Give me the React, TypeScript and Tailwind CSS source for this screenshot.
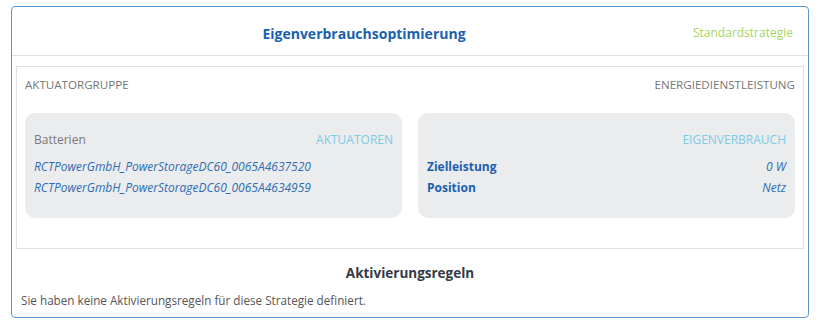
import React from 'react';

const FONT = { fontFamily: '"Open Sans", "Noto Sans", sans-serif' };

const ACTUATORS = [
  'RCTPowerGmbH_PowerStorageDC60_0065A4637520',
  'RCTPowerGmbH_PowerStorageDC60_0065A4634959',
];

const SERVICE_ROWS: [string, string][] = [
  ['Zielleistung', '0 W'],
  ['Position', 'Netz'],
];

function ActuatorCard() {
  return (
    <div className="flex-1 rounded-[10px] bg-[#ebecee] px-[9px] pt-[18px] pb-[20px]">
      <div className="flex items-center justify-between text-[12px] leading-[18px]">
        <span className="text-[#7a7a7a]">Batterien</span>
        <span className="text-[#7ccbe6]">AKTUATOREN</span>
      </div>
      <div className="mt-[7px] flex flex-col">
        {ACTUATORS.map((name) => (
          <a key={name} className="text-[12px] italic leading-[21px] text-[#2d6cb4]">
            {name}
          </a>
        ))}
      </div>
    </div>
  );
}

function ServiceCard() {
  return (
    <div className="flex-1 rounded-[10px] bg-[#ebecee] px-[9px] pt-[18px] pb-[20px]">
      <div className="flex items-center justify-end text-[12px] leading-[18px]">
        <span className="text-[#7ccbe6]">EIGENVERBRAUCH</span>
      </div>
      <div className="mt-[7px] flex flex-col">
        {SERVICE_ROWS.map(([label, value]) => (
          <div key={label} className="flex items-center justify-between text-[12px] leading-[21px]">
            <span className="font-bold text-[#1b5eae]">{label}</span>
            <span className="italic text-[#2d6cb4]">{value}</span>
          </div>
        ))}
      </div>
    </div>
  );
}

export default function App() {
  return (
    <div className="h-[329px] w-[820px] bg-white pl-[11px] pt-[6px]" style={FONT}>
      <div className="w-[798px] rounded-[4px] border border-[#5b96cf] bg-white">
        {/* Header */}
        <div className="relative flex h-[49px] items-center border-b border-[#e3e3e3] pt-[4px]">
          <h2 className="flex-1 pr-[92px] text-center text-[14px] font-bold text-[#1a5fb0]">
            Eigenverbrauchsoptimierung
          </h2>
          <span className="absolute right-[15px] text-[12px] text-[#a9d55b]">Standardstrategie</span>
        </div>

        {/* Actuator group / energy service */}
        <div className="mx-[4px] mt-[10px] h-[183px] border border-[#e1e1e1] px-[8px] pt-[9px]">
          <div className="flex items-center justify-between text-[11.6px] leading-[18px] text-[#767676]">
            <span>AKTUATORGRUPPE</span>
            <span>ENERGIEDIENSTLEISTUNG</span>
          </div>
          <div className="mt-[19px] flex gap-[16px]">
            <ActuatorCard />
            <ServiceCard />
          </div>
        </div>

        {/* Activation rules */}
        <div className="px-[9px] pt-[14px] pb-[8px]">
          <h3 className="text-center text-[13.5px] font-bold leading-[20px] text-[#333a46]">Aktivierungsregeln</h3>
          <p className="mt-[8px] text-[11.7px] leading-[18px] text-[#555]">
            Sie haben keine Aktivierungsregeln für diese Strategie definiert.
          </p>
        </div>
      </div>
    </div>
  );
}
